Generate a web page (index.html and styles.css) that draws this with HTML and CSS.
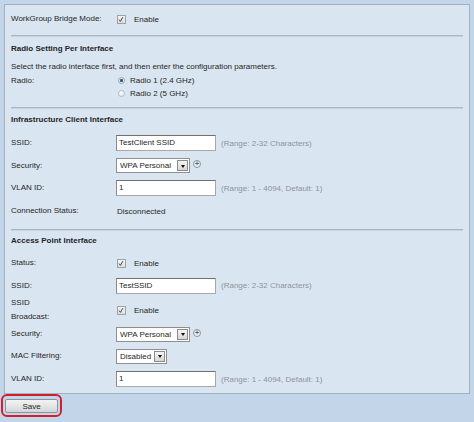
FILE: index.html
```html
<!DOCTYPE html>
<html lang="en">
<head>
    <meta charset="UTF-8">
    <title>WorkGroup Bridge</title>
    <link rel="stylesheet" href="styles.css">
</head>
<body>
    <div class="panel">
        <div class="row row-top">
            <span class="label">WorkGroup Bridge Mode:</span>
            <span class="check"><svg width="9" height="9" viewBox="0 0 9 9"><path d="M2.3 4.6 L3.8 6.6 L6.6 1.8" fill="none" stroke="#333" stroke-width="1"/></svg></span>
            <span class="check-text">Enable</span>
        </div>
        <div class="sep sep-1"></div>

        <div class="title title-1">Radio Setting Per Interface</div>
        <div class="note">Select the radio interface first, and then enter the configuration parameters.</div>
        <div class="radio-row radio-first">
            <span class="label">Radio:</span>
            <span class="radio on"></span>
            <span class="radio-text">Radio 1 (2.4 GHz)</span>
        </div>
        <div class="radio-row">
            <span class="label"></span>
            <span class="radio"></span>
            <span class="radio-text">Radio 2 (5 GHz)</span>
        </div>
        <div class="sep sep-2"></div>

        <div class="title title-2">Infrastructure Client Interface</div>
        <div class="row row-first">
            <span class="label">SSID:</span>
            <span class="field">TestClient SSID</span>
            <span class="hint">(Range: 2-32 Characters)</span>
        </div>
        <div class="row">
            <span class="label">Security:</span>
            <span class="select sel-wpa"><span class="sel-val">WPA Personal</span><span class="sel-btn"></span></span>
            <span class="plus">+</span>
        </div>
        <div class="row">
            <span class="label">VLAN ID:</span>
            <span class="field">1</span>
            <span class="hint">(Range: 1 - 4094, Default: 1)</span>
        </div>
        <div class="row">
            <span class="label">Connection Status:</span>
            <span class="value">Disconnected</span>
        </div>
        <div class="sep sep-3"></div>

        <div class="title title-3">Access Point Interface</div>
        <div class="row row-status">
            <span class="label">Status:</span>
            <span class="check"><svg width="9" height="9" viewBox="0 0 9 9"><path d="M2.3 4.6 L3.8 6.6 L6.6 1.8" fill="none" stroke="#333" stroke-width="1"/></svg></span>
            <span class="check-text">Enable</span>
        </div>
        <div class="row">
            <span class="label">SSID:</span>
            <span class="field">TestSSID</span>
            <span class="hint">(Range: 2-32 Characters)</span>
        </div>
        <div class="row row-tall">
            <span class="label">SSID<br>Broadcast:</span>
            <span class="check"><svg width="9" height="9" viewBox="0 0 9 9"><path d="M2.3 4.6 L3.8 6.6 L6.6 1.8" fill="none" stroke="#333" stroke-width="1"/></svg></span>
            <span class="check-text">Enable</span>
        </div>
        <div class="row">
            <span class="label">Security:</span>
            <span class="select sel-wpa"><span class="sel-val">WPA Personal</span><span class="sel-btn"></span></span>
            <span class="plus">+</span>
        </div>
        <div class="row row-mac">
            <span class="label">MAC Filtering:</span>
            <span class="select sel-mac"><span class="sel-val">Disabled</span><span class="sel-btn"></span></span>
        </div>
        <div class="row row-last">
            <span class="label">VLAN ID:</span>
            <span class="field">1</span>
            <span class="hint">(Range: 1 - 4094, Default: 1)</span>
        </div>
    </div>
    <div class="footer">
        <span class="mark"><button class="save">Save</button></span>
    </div>
</body>
</html>
```

FILE: styles.css
```css
* {
    margin: 0;
    padding: 0;
    box-sizing: border-box;
}
html,
body {
    width: 474px;
    height: 422px;
    overflow: hidden;
}
body {
    background-color: #c3d6e9;
    font-family: "Liberation Sans", Arial, sans-serif;
    font-size: 8px;
    color: #262626;
    padding-top: 4px;
}
.panel {
    margin: 0 4px 0 4px;
    height: 390px;
    border: 1px solid #a3b2c1;
    background-color: #d9e5f1;
    padding: 0 6px;
}
.row,
.radio-row {
    display: flex;
    align-items: center;
    height: 22.7px;
}
.row-top {
    margin-top: 3px;
    height: 22px;
}
.label {
    width: 105px;
    flex: none;
    line-height: 14px;
}
.check {
    display: inline-flex;
    width: 9px;
    height: 9px;
    margin-left: 1px;
    border: 1px solid #9aa3ad;
    background: linear-gradient(#f4f4f4, #dcdcdc);
}
.check svg {
    margin: -1px 0 0 -1px;
}
.check-text {
    margin-left: 8px;
}
.sep {
    height: 2px;
    border-top: 1px solid #a9b6c4;
    border-bottom: 1px solid #c6d2de;
    margin-right: 0;
}
.sep-1 {
    margin-top: 5px;
}
.sep-2 {
    margin-top: 7px;
}
.sep-3 {
    margin-top: 6.7px;
}
.title {
    font-weight: bold;
    height: 14px;
    line-height: 14px;
}
.title-1 {
    margin-top: 5px;
}
.title-2 {
    margin-top: 4px;
}
.title-3 {
    margin-top: 3px;
}
.note {
    margin-top: 5px;
    height: 12px;
    line-height: 12px;
}
.radio-row {
    height: 13px;
}
.radio-first {
    margin-top: 1px;
}
.radio {
    width: 7px;
    height: 7px;
    margin-left: 2px;
    border-radius: 50%;
    border: 1px solid #b4bcc4;
    background: radial-gradient(circle at 40% 35%, #ffffff, #dcdfe3);
    flex: none;
}
.radio.on {
    background: radial-gradient(circle, #2a4f7a 0, #3d6592 1.3px, #e6e9ee 2px, #d0d5db 100%);
    border-color: #9aa6b3;
}
.radio-text {
    margin-left: 5px;
}
.row-first {
    margin-top: 4.67px;
}
.field {
    width: 100px;
    height: 16px;
    line-height: 14px;
    background-color: #fff;
    border: 1px solid #a8a8a8;
    border-top-color: #707070;
    border-left-color: #8a8a8a;
    padding-left: 2px;
    color: #1e1e1e;
    flex: none;
}
.hint {
    margin-left: 5px;
    color: #8e949b;
}
.value {
    margin-left: 1px;
}
.select {
    display: inline-flex;
    align-items: center;
    height: 15px;
    background-color: #fff;
    border: 1px solid #8f8f8f;
    flex: none;
}
.sel-wpa {
    width: 74px;
}
.sel-mac {
    width: 51px;
}
.sel-val {
    flex: 1;
    padding-left: 3px;
    line-height: 13px;
}
.sel-btn {
    position: relative;
    width: 11px;
    height: 11px;
    margin-right: 1px;
    border: 1px solid #8a8a8a;
    background: linear-gradient(#f5f5f5, #d6d6d6);
}
.sel-btn:after {
    content: '';
    position: absolute;
    left: 2.5px;
    top: 3.5px;
    border-left: 2.5px solid transparent;
    border-right: 2.5px solid transparent;
    border-top: 3px solid #111;
}
.plus {
    display: inline-flex;
    align-items: center;
    justify-content: center;
    width: 8px;
    height: 8px;
    margin-left: 3px;
    margin-top: -3px;
    border-radius: 50%;
    border: 1px solid #8c96a1;
    background: #e9edf1;
    color: #55606b;
    font-size: 7px;
    line-height: 6px;
    font-weight: bold;
}
.row-status {
    margin-top: 3.65px;
}
.row-tall {
    height: 26px;
}
.row-mac {
    height: 21px;
}
.row-last {
    height: 25px;
}
.footer {
    padding-left: 1px;
}
.mark {
    display: inline-block;
    border: 2px solid #d21f2c;
    border-radius: 6px;
    padding: 3px 2px 2px 2px;
}
.save {
    display: block;
    width: 53px;
    height: 14px;
    border: 1px solid #8c949c;
    border-radius: 2px;
    background: linear-gradient(#f3f3f3, #d3d6d9);
    font-family: "Liberation Sans", Arial, sans-serif;
    font-size: 8px;
    color: #1e1e1e;
}
```
